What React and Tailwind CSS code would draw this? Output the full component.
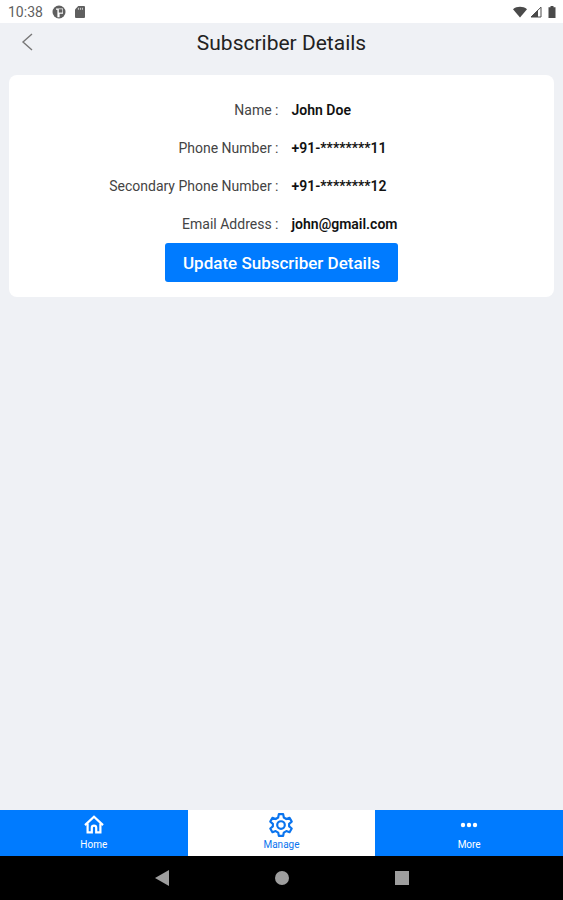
import React, { useState } from "react";

const details = [
  { label: "Name :", value: "John Doe" },
  { label: "Phone Number :", value: "+91-********11" },
  { label: "Secondary Phone Number :", value: "+91-********12" },
  { label: "Email Address :", value: "john@gmail.com" },
];

const HomeIcon = () => (
  <svg viewBox="0 0 24 24" className="w-6 h-6" fill="none" stroke="currentColor" strokeWidth="2.2">
    <path d="M3 12.1L12 3.7l9 8.4" />
    <path d="M5.6 10.5v8.9h4.2v-4.6a2.2 2.2 0 0 1 4.4 0v4.6h4.2v-8.9" />
  </svg>
);

const GearIcon = () => (
  <svg viewBox="0 0 24 24" className="w-[26px] h-[26px]" fill="none" stroke="currentColor" strokeWidth="2" strokeLinejoin="round">
    <path d="M10 2h4l.6 3.1 2.3 1.4 3-1.1 2 3.5-2.4 2v2.3l2.4 2-2 3.5-3-1.1-2.3 1.4L14 22h-4l-.6-3-2.3-1.4-3 1.1-2-3.5 2.4-2v-2.3l-2.4-2 2-3.5 3 1.1 2.3-1.4z" />
    <circle cx="12" cy="12" r="3.5" />
  </svg>
);

const DotsIcon = () => (
  <svg viewBox="0 0 24 24" className="w-6 h-6" fill="currentColor">
    <circle cx="6" cy="12" r="2.2" />
    <circle cx="12" cy="12" r="2.2" />
    <circle cx="18" cy="12" r="2.2" />
  </svg>
);

const tabs = [
  { id: "home", label: "Home", icon: <HomeIcon /> },
  { id: "manage", label: "Manage", icon: <GearIcon /> },
  { id: "more", label: "More", icon: <DotsIcon /> },
];

const StatusBar = () => (
  <div className="h-[23px] bg-white flex items-center justify-between pl-2 pr-1 text-[#5f5f5f]">
    <div className="flex items-center">
      <span className="w-11 text-[14px] leading-4">10:38</span>
      <svg viewBox="0 0 14 14" className="w-[14px] h-[14px] mr-2">
        <circle cx="7" cy="7" r="6.5" fill="currentColor" />
        <path d="M4 3.4h7v5.4H7.6v3.4H5.4V4.8H4z" fill="#fff" />
        <path d="M6.8 4.2h3.6v3.4H6.8z" fill="currentColor" />
      </svg>
      <svg viewBox="0 0 12 14" className="w-3 h-[14px]">
        <path d="M4.2 1H10a1 1 0 0 1 1 1v10a1 1 0 0 1-1 1H2a1 1 0 0 1-1-1V4.4z" fill="currentColor" />
        <path d="M4.4 2.8v2M6.4 2.8v2M8.4 2.8v2" stroke="#fff" strokeWidth="0.7" />
      </svg>
    </div>
    <div className="flex items-center gap-[3px] text-[#4a4a4a]">
      <svg viewBox="0 0 14 12" className="w-[14px] h-3">
        <path d="M0 3.2C4 0 10 0 14 3.2L7 11.5z" fill="currentColor" />
      </svg>
      <svg viewBox="0 0 12 12" className="w-3 h-3">
        <path d="M11 1.2v9.8H1z" fill="none" stroke="currentColor" strokeWidth="1" />
        <path d="M8 4v7H1z" fill="currentColor" />
      </svg>
      <svg viewBox="0 0 12 12" className="w-[14px] h-3">
        <path d="M4.5 0h3v1.2h2V12h-7V1.2h2z" fill="currentColor" />
      </svg>
    </div>
  </div>
);

const Header = () => (
  <header className="h-10 grid grid-cols-[56px_1fr_56px] items-center">
    <button aria-label="Back" className="h-10 flex items-center pl-5 pb-[2px] text-[#777]">
      <svg viewBox="0 0 14 20" className="w-[14px] h-5" fill="none" stroke="currentColor" strokeWidth="1.4">
        <path d="M12 2L3 10l9 8" />
      </svg>
    </button>
    <h1 className="text-center text-[21px] leading-7 text-[#222]">Subscriber Details</h1>
  </header>
);

const App = () => {
  const [active, setActive] = useState("manage");

  return (
    <div className="min-h-screen flex flex-col bg-[#eff1f5] font-[Roboto,sans-serif]">
      <StatusBar />
      <Header />

      <main className="flex-1 pt-3 px-[9px]">
        <section className="bg-white rounded-lg pt-4 pb-[15px] flex flex-col items-center">
          <dl className="w-full pl-[7px]">
            {details.map((item) => (
              <div key={item.label} className="grid grid-cols-2 gap-[13px] h-[38px] items-center text-[14px] leading-5">
                <dt className="text-right text-[#444]">{item.label}</dt>
                <dd className="font-semibold text-[#111]">{item.value}</dd>
              </div>
            ))}
          </dl>
          <button className="h-[39px] px-[18px] bg-[#007bff] rounded-[3px] text-white text-[17px] leading-6 font-medium">
            Update Subscriber Details
          </button>
        </section>
      </main>

      {/* Bottom tabs */}
      <nav className="h-[46px] grid grid-cols-3">
        {tabs.map((tab) => (
          <button
            key={tab.id}
            onClick={() => setActive(tab.id)}
            className={`flex flex-col items-center pt-px text-[10px] leading-3 ${
              active === tab.id ? "bg-white text-[#0a74ee]" : "bg-[#007bff] text-white"
            }`}
          >
            <span className="h-7 flex items-center">{tab.icon}</span>
            {tab.label}
          </button>
        ))}
      </nav>

      {/* Device buttons */}
      <div className="h-11 bg-black flex items-center justify-center gap-[106px] text-[#9e9e9e]">
        <button aria-label="System back">
          <svg viewBox="0 0 14 16" className="w-[14px] h-4" fill="currentColor">
            <path d="M14 0v16L0 8z" />
          </svg>
        </button>
        <button aria-label="System home" className="w-[14px] h-[14px] rounded-full bg-[#9e9e9e]" />
        <button aria-label="Recent apps" className="w-[14px] h-[14px] bg-[#9e9e9e]" />
      </div>
    </div>
  );
};

export default App;
